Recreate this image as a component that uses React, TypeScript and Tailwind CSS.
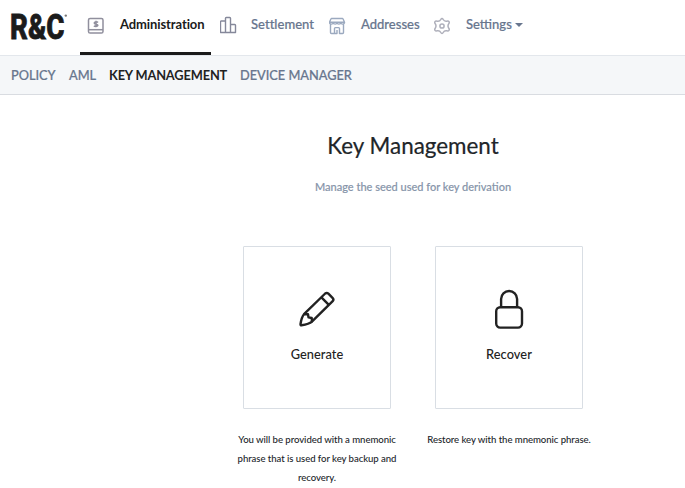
import React from "react";

function Logo() {
  return (
    <svg width="58" height="38" viewBox="0 0 58 38" className="block shrink-0 overflow-visible" fill="#1b1b1b">
      <text x="-1" y="31" fontFamily="'Roboto','Liberation Sans',sans-serif" fontWeight="800" fontSize="34.5" stroke="#1b1b1b" strokeWidth="0.8" textLength="54.5" lengthAdjust="spacingAndGlyphs">R&amp;C</text>
      <circle cx="54.8" cy="7.6" r="1.2" fill="#777" />
    </svg>
  );
}

function CashIcon() {
  return (
    <svg width="18" height="18" viewBox="0 0 18 18" fill="none" stroke="#908f9d" strokeWidth="1.5" className="block">
      <rect x="1.5" y="1.5" width="14.5" height="14.5" rx="1.6" />
      <path d="M1.5 12.7h14.5" />
      <path d="M11 5.4C10.4 4.7 7.2 4.5 7.2 6c0 1.5 3.7.8 3.7 2.3 0 1.5-3.2 1.4-4 .5M9 3.8v6.5" />
    </svg>
  );
}

function BarsIcon() {
  return (
    <svg width="18" height="18" viewBox="0 0 18 18" fill="none" stroke="#85889a" strokeWidth="1.4" strokeLinejoin="round" className="block">
      <path d="M5.5 16.5V5H1.3q-.8 0-.8.8v10.7zM5.5 5V2.3q0-.8.8-.8h3.4q.8 0 .8.8v14.2h-5M10.5 8.5h4.2q.8 0 .8.8v7.2h-5" />
    </svg>
  );
}

function StoreIcon() {
  return (
    <svg width="18" height="18" viewBox="0 0 18 18" fill="none" stroke="#9ba9bf" strokeWidth="1.4" strokeLinejoin="round" className="block">
      <path d="M2.6 1.5h10.8q.5 0 .7.5l1.4 3.2H.5L1.9 2q.2-.5.7-.5zM.5 5.2v.7a1.9 1.5 0 0 0 3.75 0 1.9 1.5 0 0 0 3.75 0 1.9 1.5 0 0 0 3.75 0 1.9 1.5 0 0 0 3.75 0v-.7M1.5 7.6v8q0 .9.9.9h3.1v-5q0-.9.9-.9h3.2q.9 0 .9.9v5h3.1q.9 0 .9-.9v-8M8 13v3.5H5.5" />
    </svg>
  );
}

function GearIcon() {
  return (
    <svg width="18" height="18" viewBox="0 0 18 18" fill="none" stroke="#afb0bb" strokeWidth="1.5" strokeLinejoin="round" className="block">
      <path d="M8 1.6Q8.7 1.6 9.2 2.5C10 4 11 4.5 12.8 4.2Q14.4 3.8 15 4.7 15.6 5.6 14.8 6.7C13.7 8.3 13.7 9.7 14.8 11.3Q15.6 12.4 15 13.3 14.4 14.2 12.8 13.8C11 13.5 10 14 9.2 15.5Q8.7 16.4 8 16.4 7.3 16.4 6.8 15.5C6 14 5 13.5 3.2 13.8Q1.6 14.2 1 13.3.4 12.4 1.2 11.3C2.3 9.7 2.3 8.3 1.2 6.7Q.4 5.6 1 4.7 1.6 3.8 3.2 4.2C5 4.5 6 4 6.8 2.5Q7.3 1.6 8 1.6z" />
      <circle cx="8" cy="9" r="2.1" />
    </svg>
  );
}

function PencilIcon() {
  return (
    <svg width="38" height="38" viewBox="0 0 38 38" fill="none" stroke="#222" strokeWidth="2.4" strokeLinejoin="round" strokeLinecap="round" className="block">
      <path d="M6 24.2 27.2 3.5q1.6-1.3 3.2.2l4.1 4.1q1.7 1.8.2 3.4L13.9 31.7Q11.3 34.2 3.5 35.3q-1.1.1-1-1.1Q3.5 27.2 6 24.2zM6 24.2l4 .1.5 3.1 3.2.6.2 3.7M23.4 7.4l7.2 7.2" />
    </svg>
  );
}

function LockIcon() {
  return (
    <svg width="30" height="40" viewBox="0 0 30 40" fill="none" stroke="#222" strokeWidth="2.4" className="block">
      <rect x="2.2" y="18.2" width="25.8" height="20.4" rx="4" />
      <path d="M7.1 18.2V10a8 8 0 0 1 16 0v8.2" />
    </svg>
  );
}

type CardProps = { icon: React.ReactNode; label: string; children: React.ReactNode };

function Card({ icon, label, children }: CardProps) {
  return (
    <div className="flex w-[164px] flex-col items-center">
      <button className="flex h-[163px] w-[148px] flex-col items-center rounded-[1px] border border-[#d9dee4] pt-[42px]">
        <span className="flex h-10 items-center justify-center">{icon}</span>
        <span className="mt-[15px] text-[12.8px] leading-5 font-medium tracking-[0.06px] text-[#222]">{label}</span>
      </button>
      <p className="mt-[21px] text-center text-[9.6px] leading-[19px] font-medium tracking-[-0.06px] whitespace-nowrap text-[#212529]">{children}</p>
    </div>
  );
}

export default function App() {
  return (
    <div className="h-[488px] w-full overflow-hidden bg-white font-['Lato',sans-serif] text-[#212529]">
      <header className="flex h-14 items-start border-b border-[#e3e7ec] pl-[11px] text-[13px] leading-5 font-medium text-[#68768e] [-webkit-text-stroke:0.2px]">
        <div className="w-[69px] pt-2"><Logo /></div>
        <nav className="flex">
          <a className="flex h-[55px] w-[131px] border-b-[3px] border-[#1b1b1b] pt-[14px] pl-[7px] font-bold text-[#1b1b1b] [-webkit-text-stroke:0px]">
            <span className="w-[33px] pt-[3px]"><CashIcon /></span>
            <span className="tracking-[-0.1px]">Administration</span>
          </a>
          <a className="flex w-[118px] pt-[14px] pl-[9px]">
            <span className="w-[31px] pt-0.5"><BarsIcon /></span>
            <span className="tracking-[0.02px]">Settlement</span>
          </a>
          <a className="flex w-[105px] pt-[14px]">
            <span className="w-8 pt-[3px]"><StoreIcon /></span>
            <span>Addresses</span>
          </a>
          <a className="flex pt-[14px]">
            <span className="w-8 pt-[3px]"><GearIcon /></span>
            <span>Settings</span>
            <span className="mt-[9px] ml-[3px] h-0 w-0 border-x-4 border-t-4 border-x-transparent border-t-[#68768e]" />
          </a>
        </nav>
      </header>
      <nav className="flex h-[39px] items-center border-b border-[#d9dce1] bg-[#f5f7f9] pt-0.5 pl-[11px] text-[12.8px] font-medium tracking-[-0.03px] text-[#68768e] [-webkit-text-stroke:0.2px]">
        <a className="w-[58px]">POLICY</a>
        <a className="w-10">AML</a>
        <a className="w-[131px] font-bold tracking-[-0.14px] whitespace-nowrap text-[#222] [-webkit-text-stroke:0px]">KEY MANAGEMENT</a>
        <a className="whitespace-nowrap">DEVICE MANAGER</a>
      </nav>
      <main className="flex flex-col items-center pt-[34px] pl-[141px]">
        <h1 className="text-[22.4px] leading-[34px] whitespace-nowrap [-webkit-text-stroke:0.2px]">Key Management</h1>
        <p className="mt-[14px] text-[11px] leading-5 font-medium whitespace-nowrap text-[#8795aa] [-webkit-text-stroke:0.15px]">Manage the seed used for key derivation</p>
        <div className="mt-[49px] flex gap-7">
          <Card icon={<PencilIcon />} label="Generate">
            You will be provided with a mnemonic<br />phrase that is used for key backup and<br />recovery.
          </Card>
          <Card icon={<LockIcon />} label="Recover">Restore key with the mnemonic phrase.</Card>
        </div>
      </main>
    </div>
  );
}
